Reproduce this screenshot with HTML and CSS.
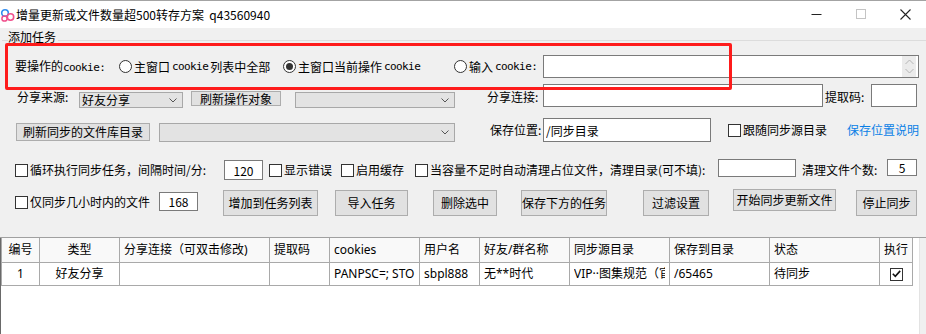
FILE: index.html
```html
<!DOCTYPE html>
<html lang="zh-CN">
<head>
    <meta charset="UTF-8">
    <title>增量更新或文件数量超500转存方案</title>
    <link rel="stylesheet" href="styles.css">
</head>
<body>
<div class="window">
    <div class="titlebar">
        <svg class="app-icon" viewBox="0 0 16 16">
            <circle cx="5" cy="6" r="3.3" fill="none" stroke="#2f8cf0" stroke-width="1.6"/>
            <circle cx="4.5" cy="11.5" r="2.6" fill="none" stroke="#f0508c" stroke-width="1.5"/>
            <circle cx="10.5" cy="10" r="3.2" fill="none" stroke="#f0508c" stroke-width="1.6"/>
        </svg>
        <span class="title">增量更新或文件数量超500转存方案&nbsp;&nbsp;q43560940</span>
        <div class="controls">
            <span class="ctl ctl-min"><svg width="11" height="11" viewBox="0 0 11 11"><line x1="0.5" y1="5.5" x2="10.5" y2="5.5" stroke="#222"/></svg></span>
            <span class="ctl ctl-max"><svg width="11" height="11" viewBox="0 0 11 11"><rect x="0.5" y="0.5" width="9" height="9" fill="none" stroke="#c4c4c4"/></svg></span>
            <span class="ctl ctl-close"><svg width="11" height="11" viewBox="0 0 11 11"><path d="M0.5 0.5 L10.5 10.5 M10.5 0.5 L0.5 10.5" stroke="#222" stroke-width="1.1"/></svg></span>
        </div>
    </div>

    <div class="panel">
        <div class="group-head"><span class="legend">添加任务</span></div>

        <div class="row r1">
            <span class="label ck-label">要操作的<span class="en">cookie:</span></span>
            <span class="opt opt-all"><span class="radio"></span>主窗口<span class="en">cookie</span>列表中全部</span>
            <span class="opt opt-cur"><span class="radio on"></span>主窗口当前操作<span class="en">cookie</span></span>
            <span class="opt opt-in"><span class="radio"></span>输入<span class="en">cookie:</span></span>
            <div class="memo">
                <div class="memo-scroll">
                    <svg width="9" height="6" viewBox="0 0 9 6"><polyline points="0.5,5 4.5,1 8.5,5" fill="none" stroke="#b5b5b5"/></svg>
                    <svg width="9" height="6" viewBox="0 0 9 6"><polyline points="0.5,1 4.5,5 8.5,1" fill="none" stroke="#b5b5b5"/></svg>
                </div>
            </div>
        </div>

        <div class="row r2">
            <span class="label src-label">分享来源:</span>
            <div class="combo src-combo"><span>好友分享</span><svg width="8" height="5" viewBox="0 0 8 5"><polyline points="0.5,0.5 4,4 7.5,0.5" fill="none" stroke="#555"/></svg></div>
            <div class="btn btn-refresh">刷新操作对象</div>
            <div class="combo obj-combo"><span></span><svg width="8" height="5" viewBox="0 0 8 5"><polyline points="0.5,0.5 4,4 7.5,0.5" fill="none" stroke="#555"/></svg></div>
            <span class="label link-label">分享连接:</span>
            <input class="textbox link-input" type="text" value="">
            <span class="label code-label">提取码:</span>
            <input class="textbox code-input" type="text" value="">
        </div>

        <div class="row r3">
            <div class="btn btn-lib">刷新同步的文件库目录</div>
            <div class="combo lib-combo"><span></span><svg width="8" height="5" viewBox="0 0 8 5"><polyline points="0.5,0.5 4,4 7.5,0.5" fill="none" stroke="#555"/></svg></div>
            <span class="label save-label">保存位置:</span>
            <input class="textbox save-input" type="text" value="/同步目录">
            <span class="check follow-check"><span class="box"></span>跟随同步源目录</span>
            <a class="help-link">保存位置说明</a>
        </div>

        <div class="row r4">
            <span class="check loop-check"><span class="box"></span>循环执行同步任务，间隔时间/分:</span>
            <input class="textbox num-input" type="text" value="120">
            <span class="check err-check"><span class="box"></span>显示错误</span>
            <span class="check cache-check"><span class="box"></span>启用缓存</span>
            <span class="check clean-check"><span class="box"></span>当容量不足时自动清理占位文件，清理目录(可不填):</span>
            <input class="textbox clean-input" type="text" value="">
            <span class="label count-label">清理文件个数:</span>
            <input class="textbox count-input" type="text" value="5">
        </div>

        <div class="row r5">
            <span class="check hours-check"><span class="box"></span>仅同步几小时内的文件</span>
            <input class="textbox hours-input" type="text" value="168">
            <div class="btn act btn-add">增加到任务列表</div>
            <div class="btn act btn-import">导入任务</div>
            <div class="btn act btn-del">删除选中</div>
            <div class="btn act btn-save">保存下方的任务</div>
            <div class="btn act btn-filter">过滤设置</div>
            <div class="btn act btn-start">开始同步更新文件</div>
            <div class="btn act btn-stop">停止同步</div>
        </div>

        <div class="mark"></div>
    </div>

    <div class="list">
        <div class="grid">
            <table>
                <colgroup>
                    <col style="width:38px"><col style="width:80px"><col style="width:150px"><col style="width:60px">
                    <col style="width:90px"><col style="width:60px"><col style="width:90px"><col style="width:100px">
                    <col style="width:100px"><col style="width:110px"><col style="width:33px">
                </colgroup>
                <thead>
                    <tr>
                        <th class="c">编号</th><th class="c">类型</th><th>分享连接（可双击修改)</th><th>提取码</th>
                        <th>cookies</th><th>用户名</th><th>好友/群名称</th><th>同步源目录</th>
                        <th>保存到目录</th><th>状态</th><th>执行</th>
                    </tr>
                </thead>
                <tbody>
                    <tr>
                        <td class="c">1</td><td class="c">好友分享</td><td></td><td></td>
                        <td><span class="clip">PANPSC=; STOKEN</span></td><td>sbpl888</td><td>无**时代</td><td><span class="clip">VIP··图集规范（官方）</span></td>
                        <td>/65465</td><td>待同步</td>
                        <td class="c"><span class="tick"><svg width="9" height="8" viewBox="0 0 9 8"><polyline points="0.8,3.8 3.3,6.3 8.2,0.9" fill="none" stroke="#111" stroke-width="1.6"/></svg></span></td>
                    </tr>
                </tbody>
            </table>
        </div>
        <div class="vscroll"></div>
    </div>
</div>
</body>
</html>
```

FILE: styles.css
```css
* {
    box-sizing: border-box;
}
body {
    margin: 0;
    font-family: "Noto Sans CJK SC", "Microsoft YaHei", sans-serif;
    font-size: 12px;
    line-height: 16px;
    color: #000;
    background: #f0f0f0;
    text-autospace: no-autospace;
}
.window {
    width: 926px;
    height: 334px;
    overflow: hidden;
    background: #f0f0f0;
}

/* title bar */
.titlebar {
    height: 28px;
    background: #fff;
    border-top: 1px solid #a3a3a3;
    display: flex;
    align-items: center;
}
.app-icon {
    width: 16px;
    height: 16px;
    flex: none;
}
.title {
    white-space: nowrap;
}
.controls {
    margin-left: auto;
    display: flex;
    height: 100%;
}
.ctl {
    display: flex;
    align-items: center;
    justify-content: center;
    height: 100%;
}
.ctl-min { width: 46px; }
.ctl-max { width: 45px; }
.ctl-close { width: 42px; }

/* group */
.panel {
    position: relative;
    padding: 1px 0 21px;
}
.group-head {
    display: flex;
    align-items: flex-start;
    height: 16px;
}
.group-head::before {
    content: "";
    width: 6px;
    margin: 11px 0 0 2px;
    border-top: 1px solid #dcdcdc;
}
.group-head::after {
    content: "";
    flex: 1;
    margin-top: 11px;
    border-top: 1px solid #dcdcdc;
}
.legend {
    padding-right: 2px;
}

.row {
    display: flex;
}
.r1 { margin-top: 10px; height: 23px; align-items: center; }
.r2 { margin-top: 6px; height: 24px; align-items: flex-end; }
.r3 { margin-top: 10px; height: 24px; align-items: flex-end; }
.r4 { margin-top: 17px; height: 21px; align-items: flex-end; }
.r5 { margin-top: 9px; height: 27px; align-items: flex-end; }

.label,
.opt,
.check {
    white-space: nowrap;
    flex: none;
}
.en {
    font-family: "DejaVu Sans Mono", "Liberation Mono", monospace;
    font-size: 11px;
    letter-spacing: -0.6px;
}

/* radios and checkboxes */
.opt {
    display: flex;
    align-items: center;
    gap: 2px;
}
.radio {
    width: 13px;
    height: 13px;
    border: 1px solid #333;
    border-radius: 50%;
    background: #fff;
    display: flex;
    align-items: center;
    justify-content: center;
    flex: none;
}
.radio.on::after {
    content: "";
    width: 7px;
    height: 7px;
    border-radius: 50%;
    background: #333;
}
.check {
    display: flex;
    align-items: center;
    gap: 2px;
}
.box {
    width: 13px;
    height: 13px;
    border: 1px solid #333;
    background: #fff;
    flex: none;
}

/* fields */
.textbox {
    flex: none;
    margin: 0;
    padding: 0 2px;
    background: #fff;
    border: 1px solid #7a7a7a;
    font: inherit;
    color: #000;
    outline: none;
}
.memo {
    width: 376px;
    height: 23px;
    background: #fff;
    border: 1px solid #7a7a7a;
    display: flex;
    justify-content: flex-end;
    padding: 0 2px 0 0;
}
.memo-scroll {
    width: 14px;
    height: 100%;
    background: #ebebeb;
    display: flex;
    flex-direction: column;
    align-items: center;
    justify-content: space-between;
    padding: 3px 0;
}
.combo {
    flex: none;
    display: flex;
    align-items: center;
    justify-content: space-between;
    height: 16px;
    padding: 0 5px 0 2px;
    background: #e3e3e3;
    border: 1px solid #a8a8a8;
    line-height: 14px;
}
.btn {
    flex: none;
    display: flex;
    align-items: center;
    justify-content: center;
    background: #e1e1e1;
    border: 1px solid #adadad;
    white-space: nowrap;
}

/* row 1 */
.ck-label { margin-left: 15px; width: 104px; }
.opt-all { width: 164px; }
.opt-cur { width: 171px; }
.opt-in { width: 89px; }

/* row 2 */
.src-label { margin-left: 17px; width: 62px; margin-bottom: 3px; }
.src-combo { width: 104px; }
.btn-refresh { margin-left: 8px; width: 90px; height: 15px; margin-bottom: 2px; line-height: 13px; }
.obj-combo { margin-left: 14px; width: 160px; }
.link-label { margin-left: 32px; width: 56px; margin-bottom: 3px; }
.link-input { width: 280px; height: 23px; margin-bottom: 1px; }
.code-label { margin-left: 2px; width: 46px; margin-bottom: 3px; }
.code-input { width: 46px; height: 23px; margin-bottom: 1px; }

/* row 3 */
.btn-lib { margin-left: 16px; width: 134px; height: 18px; margin-bottom: 1px; }
.lib-combo { margin-left: 9px; width: 296px; height: 19px; }
.save-label { margin-left: 35px; width: 53px; margin-bottom: 4px; }
.save-input { width: 168px; height: 24px; }
.follow-check { margin-left: 17px; margin-bottom: 4px; }
.help-link { margin-left: 20px; margin-bottom: 4px; color: #0a7fe6; white-space: nowrap; }

/* row 4 */
.r4 .check { margin-bottom: 2px; }
.loop-check { margin-left: 15px; width: 209px; }
.num-input { width: 39px; height: 20px; text-align: center; }
.err-check { margin-left: 6px; width: 66px; }
.cache-check { margin-left: 6px; width: 68px; }
.clean-check { margin-left: 6px; width: 303px; }
.clean-input { width: 78px; height: 18px; margin-bottom: 3px; }
.count-label { margin-left: 6px; width: 85px; margin-bottom: 2px; }
.count-input { width: 30px; height: 17px; margin-bottom: 4px; text-align: center; }

/* row 5 */
.hours-check { margin-left: 15px; width: 144px; margin-bottom: 6px; }
.hours-input { width: 39px; height: 19px; margin-bottom: 5px; text-align: center; }
.act { height: 26px; }
.btn-add { margin-left: 25px; width: 95px; }
.btn-import { margin-left: 17px; width: 73px; }
.btn-del { margin-left: 25px; width: 64px; }
.btn-save { margin-left: 24px; width: 86px; }
.btn-filter { margin-left: 36px; width: 66px; }
.btn-start { margin-left: 24px; width: 103px; height: 22px; margin-bottom: 5px; }
.btn-stop { margin-left: 20px; width: 61px; }

/* annotation frame */
.mark {
    position: absolute;
    left: 5px;
    top: 15px;
    width: 727px;
    height: 47px;
    border: 3px solid #fe1b1b;
    border-radius: 2px;
}

/* task list */
.list {
    display: flex;
    height: 97px;
    border-top: 1px solid #a0a0a0;
    background: #fff;
}
.grid {
    width: 919px;
    border-left: 1px solid #696969;
}
.vscroll {
    flex: 1;
    background: #f0f0f0;
    border-left: 1px solid #e3e3e3;
}
table {
    border-collapse: collapse;
    table-layout: fixed;
    width: 911px;
    font-family: "Noto Sans", "Noto Sans CJK SC", sans-serif;
}
th,
td {
    border: 1px solid #a9a9a9;
    padding: 0 4px;
    white-space: nowrap;
    overflow: hidden;
    text-align: left;
    font-weight: normal;
}
th {
    border-top: none;
    background: #f9f9f9;
}
thead tr { height: 24px; }
tbody tr { height: 23px; }
th.c,
td.c {
    text-align: center;
}
.clip {
    display: block;
    overflow: hidden;
}
.tick {
    display: inline-flex;
    align-items: center;
    justify-content: center;
    width: 13px;
    height: 13px;
    border: 1px solid #333;
    background: #fff;
    vertical-align: middle;
}
```
